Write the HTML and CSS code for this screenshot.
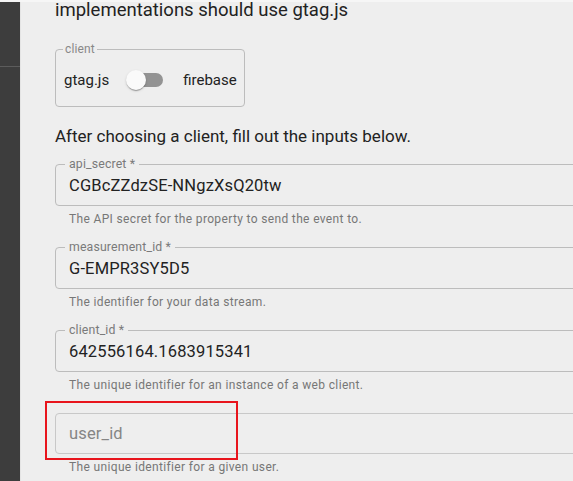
FILE: index.html
```html
<!DOCTYPE html>
<html>
<head>
<meta charset="utf-8">
<link rel="stylesheet" href="styles.css">
</head>
<body>
<div class="topline"></div>
<div class="layout">
  <aside class="sidebar"><div class="sidebar-top"></div></aside>
  <main class="main">
    <p class="lead">implementations should use gtag.js</p>
    <fieldset class="client-box">
      <legend class="client-legend">client</legend>
      <div class="client-row">
        <span class="opt">gtag.js</span>
        <span class="switch"><span class="track"></span><span class="thumb"></span></span>
        <span class="opt">firebase</span>
      </div>
    </fieldset>
    <p class="lead lead-2">After choosing a client, fill out the inputs below.</p>

    <div class="group">
      <fieldset class="field">
        <legend class="field-label">api_secret *</legend>
        <div class="value">CGBcZZdzSE-NNgzXsQ20tw</div>
      </fieldset>
      <p class="helper">The API secret for the property to send the event to.</p>
    </div>

    <div class="group">
      <fieldset class="field">
        <legend class="field-label">measurement_id *</legend>
        <div class="value">G-EMPR3SY5D5</div>
      </fieldset>
      <p class="helper">The identifier for your data stream.</p>
    </div>

    <div class="group">
      <fieldset class="field">
        <legend class="field-label">client_id *</legend>
        <div class="value">642556164.1683915341</div>
      </fieldset>
      <p class="helper">The unique identifier for an instance of a web client.</p>
    </div>

    <div class="group group-empty">
      <div class="empty-field">
        <span class="placeholder">user_id</span>
        <span class="highlight"></span>
      </div>
      <p class="helper">The unique identifier for a given user.</p>
    </div>
  </main>
</div>
</body>
</html>
```
FILE: styles.css
```css
* { box-sizing: border-box; }
html, body { margin: 0; padding: 0; }
body {
  background: #eeeeee;
  font-family: Roboto, "Liberation Sans", sans-serif;
  color: #222222;
  width: 573px;
  height: 481px;
  overflow: hidden;
}
.topline {
  height: 2px;
  background: #f6f6f6;
}
.layout {
  display: flex;
  height: 479px;
}
.sidebar {
  width: 21px;
  flex: none;
  background: #3d3d3d;
  border-right: 1px solid #e4e4e4;
}
.sidebar-top {
  height: 65px;
  border-bottom: 1px solid #5c5c5c;
}
.main {
  flex: 1;
  min-width: 0;
  padding-left: 34px;
}
.lead {
  margin: 0;
  font-size: 18.5px;
  line-height: 24px;
  margin-top: -4px;
  white-space: nowrap;
}
.lead-2 {
  font-size: 17px;
  margin-top: 17px;
}
.client-box {
  margin: 21px 0 0 0;
  width: 190px;
  border: 1px solid #bcbcbc;
  border-radius: 4px;
  padding: 0 8px 1px 8px;
  min-width: 0;
}
.client-legend {
  padding: 0 2px;
  font-size: 12px;
  line-height: 12px;
  color: #888888;
  margin-left: -1px;
  letter-spacing: 0.15px;
}
.client-row {
  display: flex;
  align-items: center;
  gap: 8px;
  height: 50px;
}
.opt {
  font-size: 15px;
  color: #222222;
}
.switch {
  position: relative;
  width: 58px;
  height: 38px;
  flex: none;
}
.track {
  position: absolute;
  left: 12px;
  top: 12px;
  width: 34px;
  height: 14px;
  border-radius: 7px;
  background: #939393;
}
.thumb {
  position: absolute;
  left: 9px;
  top: 9px;
  width: 20px;
  height: 20px;
  border-radius: 50%;
  background: #fafafa;
  box-shadow: 0 2px 1px -1px rgba(0,0,0,0.2), 0 1px 1px 0 rgba(0,0,0,0.14), 0 1px 3px 0 rgba(0,0,0,0.12);
}
.group {
  margin-top: 12px;
}
.lead-2 + .group {
  margin-top: 10px;
}
.field {
  margin: 0 -20px 0 0;
  border: 1px solid #bcbcbc;
  border-radius: 4px;
  padding: 0 0 3px 9px;
  min-width: 0;
}
.field-label {
  padding: 0 4px;
  font-size: 12.3px;
  line-height: 12px;
  letter-spacing: 0.15px;
  color: #7a7a7a;
}
.value {
  padding-left: 4px;
  font-size: 16.5px;
  letter-spacing: 0.15px;
  line-height: 32px;
  height: 32px;
  color: #222222;
  white-space: nowrap;
}
.helper {
  margin: 3px 0 0 14px;
  font-size: 12px;
  letter-spacing: 0.35px;
  line-height: 20px;
  color: #777777;
  white-space: nowrap;
}
.group-empty {
  margin-top: 18px;
}
.empty-field {
  position: relative;
  height: 41px;
  margin-right: -20px;
  border: 1px solid #c8c8c8;
  border-radius: 4px;
  padding-left: 13px;
  display: flex;
  align-items: center;
}
.placeholder {
  font-size: 16.5px;
  letter-spacing: 0.15px;
  color: #858585;
}
.highlight {
  position: absolute;
  left: -11px;
  top: -13px;
  width: 193px;
  height: 59px;
  border: 2px solid #e8141c;
}
```
